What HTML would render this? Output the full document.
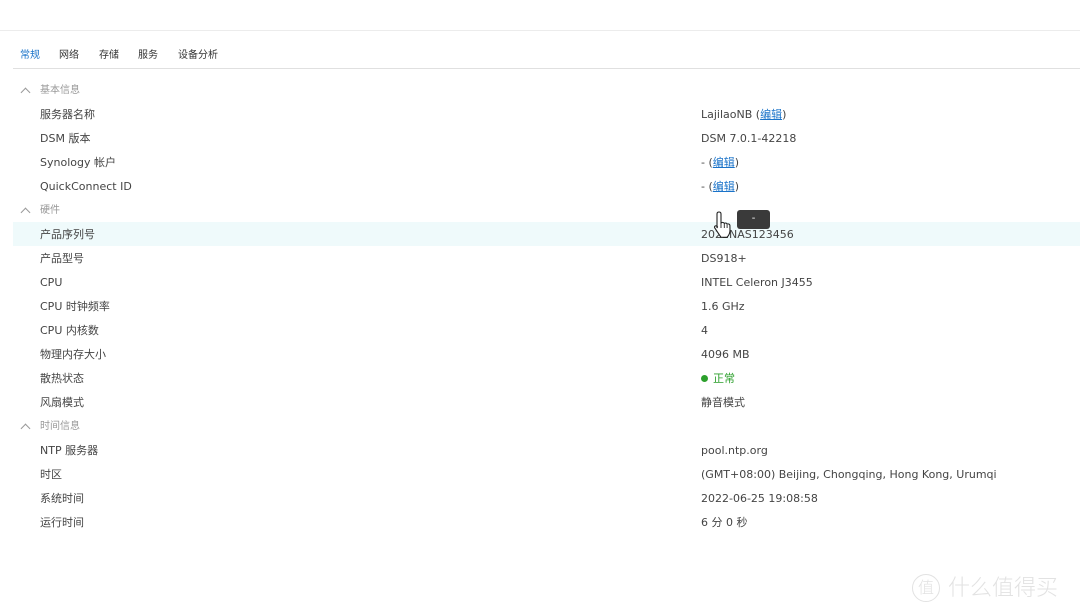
<!DOCTYPE html>
<html><head><meta charset="utf-8"><style>
*{margin:0;padding:0;box-sizing:border-box}
body{width:1080px;height:612px;background:#fff;position:relative;overflow:hidden;font-family:"DejaVu Sans","Noto Sans CJK SC",sans-serif;font-size:11px;color:#444}
.topline{position:absolute;left:0;top:30px;width:1080px;height:1px;background:#ececec}
.tabs{position:absolute;top:46px;left:20px;font-size:10px;color:#333;font-family:"Liberation Sans","Noto Sans CJK SC",sans-serif}
.tabs span{position:absolute;white-space:nowrap}
.tabline{position:absolute;left:13px;top:68px;width:1067px;height:1px;background:#e0e0e0}
.row{position:absolute;left:13px;width:1067px;height:24px;line-height:26px}
.row .k{position:absolute;left:27px}
.row .v{position:absolute;left:688px;white-space:nowrap}
.sec{color:#999;font-size:10px}
.sec .k{left:27px}
.chev{position:absolute;left:9px;top:11px;width:7px;height:7px;border-left:1px solid #999;border-top:1px solid #999;transform:rotate(45deg)}
a{color:#1a73c9;text-decoration:underline}
.hl{background:#effafb}
.dot{display:inline-block;width:7px;height:7px;border-radius:50%;background:#2ca02c;margin-right:5px;vertical-align:0}
.tip{position:absolute;left:737px;top:210px;width:33px;height:19px;background:#3a3a3a;border-radius:3px;color:#fff;text-align:center;line-height:17px;font-size:10px}
.wm{position:absolute;left:912px;top:570px;color:#e2e2e2;font-size:22px;white-space:nowrap;font-weight:300}
.wm .c{display:inline-block;width:28px;height:28px;border:1.5px solid #e2e2e2;border-radius:50%;text-align:center;line-height:25px;font-size:16px;margin-right:8px;vertical-align:2px}
</style></head><body>
<div class="topline"></div>
<div class="tabs">
<span style="left:0;color:#1a73c9">常规</span>
<span style="left:39px">网络</span>
<span style="left:79px">存储</span>
<span style="left:118px">服务</span>
<span style="left:158px">设备分析</span>
</div>
<div class="tabline"></div>

<div class="row sec" style="top:78px"><div class="chev"></div><span class="k">基本信息</span></div>
<div class="row" style="top:102px"><span class="k">服务器名称</span><span class="v">LajilaoNB (<a>编辑</a>)</span></div>
<div class="row" style="top:126px"><span class="k">DSM 版本</span><span class="v">DSM 7.0.1-42218</span></div>
<div class="row" style="top:150px"><span class="k">Synology 帐户</span><span class="v">- (<a>编辑</a>)</span></div>
<div class="row" style="top:174px"><span class="k">QuickConnect ID</span><span class="v">- (<a>编辑</a>)</span></div>
<div class="row sec" style="top:198px"><div class="chev"></div><span class="k">硬件</span></div>
<div class="row hl" style="top:222px"><span class="k">产品序列号</span><span class="v">2022NAS123456</span></div>
<div class="row" style="top:246px"><span class="k">产品型号</span><span class="v">DS918+</span></div>
<div class="row" style="top:270px"><span class="k">CPU</span><span class="v">INTEL Celeron J3455</span></div>
<div class="row" style="top:294px"><span class="k">CPU 时钟频率</span><span class="v">1.6 GHz</span></div>
<div class="row" style="top:318px"><span class="k">CPU 内核数</span><span class="v">4</span></div>
<div class="row" style="top:342px"><span class="k">物理内存大小</span><span class="v">4096 MB</span></div>
<div class="row" style="top:366px"><span class="k">散热状态</span><span class="v" style="color:#2ca02c"><span class="dot"></span>正常</span></div>
<div class="row" style="top:390px"><span class="k">风扇模式</span><span class="v">静音模式</span></div>
<div class="row sec" style="top:414px"><div class="chev"></div><span class="k">时间信息</span></div>
<div class="row" style="top:438px"><span class="k">NTP 服务器</span><span class="v">pool.ntp.org</span></div>
<div class="row" style="top:462px"><span class="k">时区</span><span class="v">(GMT+08:00) Beijing, Chongqing, Hong Kong, Urumqi</span></div>
<div class="row" style="top:486px"><span class="k">系统时间</span><span class="v">2022-06-25 19:08:58</span></div>
<div class="row" style="top:510px"><span class="k">运行时间</span><span class="v">6 分 0 秒</span></div>

<div class="tip">-</div>
<svg style="position:absolute;left:713px;top:210px" width="22" height="30" viewBox="0 0 22 30">
<path d="M6 2c1.2 0 2 .8 2 2v9l1-.5c1-.3 2 .2 2.3 1l.3-.3c1-.5 2.2 0 2.5 1l.4-.2c1-.4 2.2.2 2.4 1.3l.1 5c0 3-1 5-3 7H8l-4-6-2.3-3.5c-.6-1 .1-2 1.2-2 .6 0 1.2.4 1.6 1L4 18V4c0-1.2.8-2 2-2z" fill="#fff" stroke="#222" stroke-width="1.1"/>
<path d="M8 13v5M11.3 14v4M14.1 15v3" stroke="#222" stroke-width="0.9"/>
</svg>

<div class="wm"><span class="c">值</span>什么值得买</div>
</body></html>
